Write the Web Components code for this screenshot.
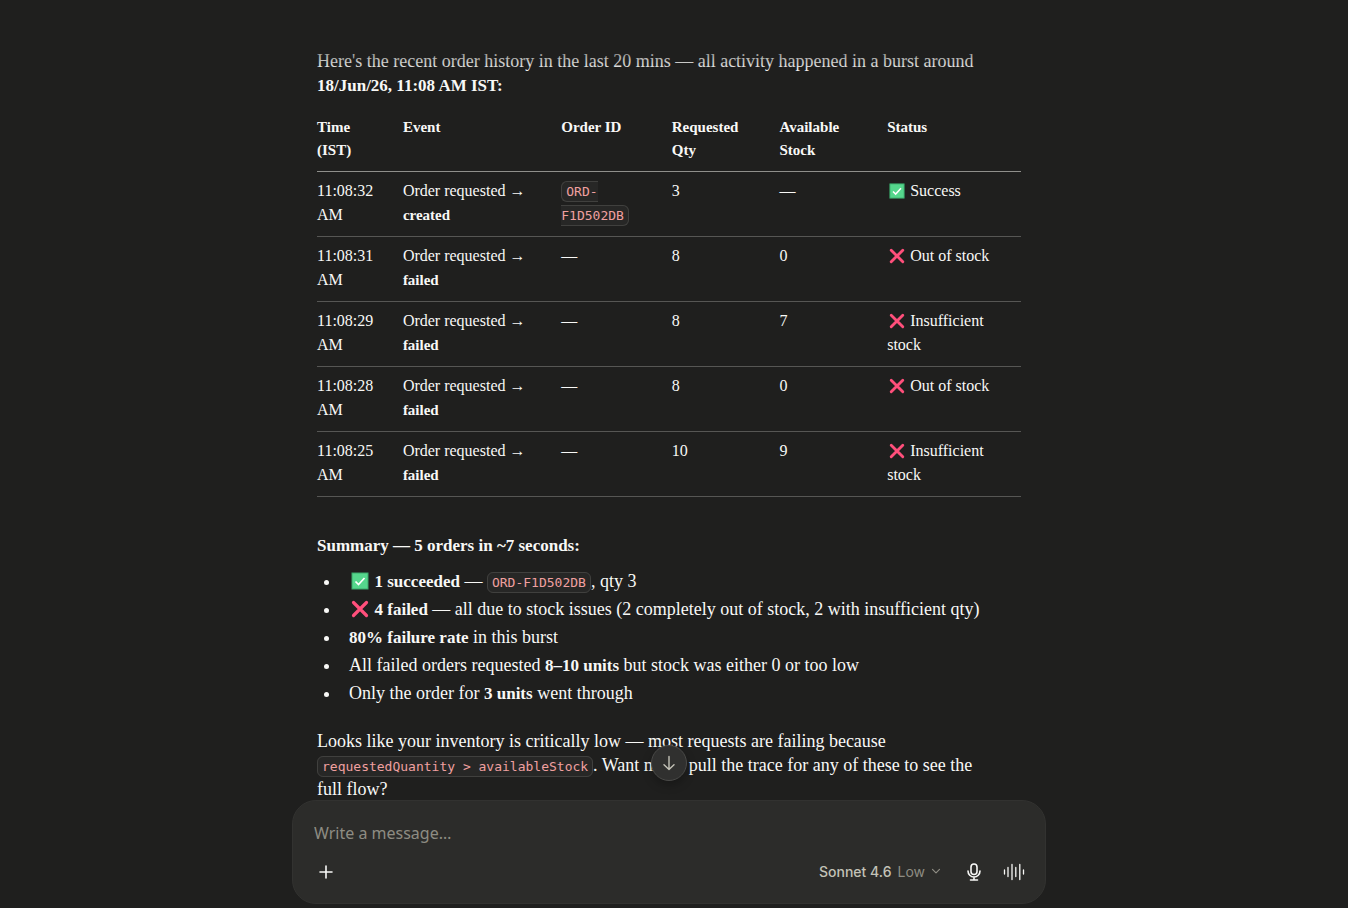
<!DOCTYPE html>
<html lang="en">
<head>
  <meta charset="UTF-8">
  <meta name="viewport" content="width=device-width, initial-scale=1.0">
  <title>Order history</title>
  <style>
    body {
      margin: 0;
      background-color: #1f1f1e;
      color: #f8f8f6;
      font-family: "Liberation Serif", serif;
      font-size: 18px;
      line-height: 24px;
    }

    strong {
      font-size: 17px;
      line-height: 20px;
    }
  </style>
</head>
<body>
  <chat-app>
    <chat-message>
      <p>Here's the recent order history in the last 20 mins — all activity happened in a burst around <strong>18/Jun/26, 11:08 AM IST:</strong></p>
      <order-table></order-table>
      <order-summary></order-summary>
      <p>Looks like your inventory is critically low — most requests are failing because <inline-code>requestedQuantity &gt; availableStock</inline-code>. Want me to pull the trace for any of these to see the full flow?</p>
    </chat-message>
    <message-composer slot="composer"></message-composer>
  </chat-app>

  <script>
    class ChatApp extends HTMLElement {
      constructor() {
        super();
        this.attachShadow({ mode: "open" });
      }

      connectedCallback() {
        this.shadowRoot.innerHTML = /*html*/ `
        <style>
          :host {
            display: flex;
            flex-direction: column;
            box-sizing: border-box;
            height: 100vh;
            padding: 0 10px 4px 0;
            position: relative;
          }

          /* fades the thread out under the top bar */
          :host::before {
            content: "";
            position: absolute;
            z-index: 1;
            inset: 0 0 auto 0;
            height: 72px;
            background: linear-gradient(#1f1f1e 40%, transparent);
            pointer-events: none;
          }

          main {
            flex: 1;
            min-height: 0;
            overflow: hidden;
            padding: 49px 24px 0;
          }

          footer {
            display: flex;
            justify-content: center;
            padding: 0 16px;
          }
        </style>
        <main><slot></slot></main>
        <footer><slot name="composer"></slot></footer>
        `;
      }
    }

    class ChatMessage extends HTMLElement {
      constructor() {
        super();
        this.attachShadow({ mode: "open" });
      }

      connectedCallback() {
        this.shadowRoot.innerHTML = /*html*/ `
        <style>
          :host {
            display: block;
            max-width: 704px;
            margin: 0 auto;
          }

          ::slotted(p) {
            margin: 0;
            padding-right: 32px;
          }

          ::slotted(order-table) {
            margin: 12px 0 36px;
          }

          ::slotted(order-summary) {
            margin-bottom: 24px;
          }
        </style>
        <slot></slot>
        `;
      }
    }

    class InlineCode extends HTMLElement {
      constructor() {
        super();
        this.attachShadow({ mode: "open" });
      }

      connectedCallback() {
        this.shadowRoot.innerHTML = /*html*/ `
        <style>
          :host {
            display: inline;
          }

          code {
            padding: 2px 4px;
            border: 1px solid #40403e;
            border-radius: 6px;
            background-color: #272726;
            color: #f0a0a0;
            font-family: "DejaVu Sans Mono", monospace;
            font-size: 13px;
            line-height: 16px;
          }
        </style>
        <code><slot></slot></code>`;
      }
    }

    class StatusIcon extends HTMLElement {
      constructor() {
        super();
        this.attachShadow({ mode: "open" });
      }

      connectedCallback() {
        const ok = this.getAttribute("kind") === "ok";
        const shape = ok
          ? `<rect x="1" y="1" width="16" height="16" fill="#55d68c" stroke="#3aa86a" stroke-width="1"/>
             <path d="M4.5 9.5l3 3 6-6.5" fill="none" stroke="#fff" stroke-width="1.7"/>`
          : `<path d="M2.5 2.5l13 13M15.5 2.5l-13 13" fill="none" stroke="#ff4f7b" stroke-width="3.2" stroke-linecap="round"/>`;

        this.shadowRoot.innerHTML = /*html*/ `
        <style>
          :host {
            display: inline-block;
            width: 1em;
            height: 1em;
            margin: 0 1px 0 2px;
            vertical-align: -3px;
          }

          svg {
            display: block;
            width: 100%;
            height: 100%;
          }
        </style>
        <svg viewBox="0 0 18 18" role="img" aria-label="${ok ? "Succeeded" : "Failed"}">${shape}</svg>
        `;
      }
    }

    class OrderTable extends HTMLElement {
      constructor() {
        super();
        this.attachShadow({ mode: "open" });
        this.orders = [
          { time: "11:08:32 AM", result: "created", id: "ORD-F1D502DB", qty: "3", stock: "—", kind: "ok", status: "Success" },
          { time: "11:08:31 AM", result: "failed", qty: "8", stock: "0", kind: "error", status: "Out of stock" },
          { time: "11:08:29 AM", result: "failed", qty: "8", stock: "7", kind: "error", status: "Insufficient stock" },
          { time: "11:08:28 AM", result: "failed", qty: "8", stock: "0", kind: "error", status: "Out of stock" },
          { time: "11:08:25 AM", result: "failed", qty: "10", stock: "9", kind: "error", status: "Insufficient stock" },
        ];
      }

      row(order) {
        const id = order.id ? `<inline-code>${order.id}</inline-code>` : "—";
        return `
          <tr>
            <td>${order.time}</td>
            <td>Order requested → <strong>${order.result}</strong></td>
            <td>${id}</td>
            <td>${order.qty}</td>
            <td>${order.stock}</td>
            <td><status-icon kind="${order.kind}"></status-icon> ${order.status}</td>
          </tr>`;
      }

      connectedCallback() {
        this.shadowRoot.innerHTML = /*html*/ `
        <style>
          :host {
            display: block;
            font-size: 16px;
          }

          table {
            width: 100%;
            table-layout: fixed;
            border-collapse: separate;
            border-spacing: 0;
          }

          th,
          td {
            box-sizing: border-box;
            padding: 7px 20px 9px 0;
            border-bottom: 1px solid #565654;
            text-align: left;
            vertical-align: top;
          }

          th {
            font-size: 15px;
            line-height: 23px;
            border-bottom-color: #8f8f8b;
          }

          strong {
            font-size: 15px;
            line-height: 20px;
          }

          th:last-child,
          td:last-child {
            padding-right: 8px;
          }

          .time { width: 12.2%; }
          .event { width: 22.5%; }
          .id { width: 15.7%; }
          .num { width: 15.3%; }
        </style>
        <table>
          <thead>
            <tr>
              <th class="time">Time (IST)</th>
              <th class="event">Event</th>
              <th class="id">Order ID</th>
              <th class="num">Requested Qty</th>
              <th class="num">Available Stock</th>
              <th>Status</th>
            </tr>
          </thead>
          <tbody>${this.orders.map(this.row).join("")}</tbody>
        </table>
        `;
      }
    }

    class OrderSummary extends HTMLElement {
      constructor() {
        super();
        this.attachShadow({ mode: "open" });
      }

      connectedCallback() {
        this.shadowRoot.innerHTML = /*html*/ `
        <style>
          :host {
            display: block;
          }

          p {
            margin: 0 0 12px;
          }

          strong {
            font-size: 17px;
            line-height: 20px;
          }

          ul {
            display: flex;
            flex-direction: column;
            gap: 4px;
            margin: 0;
            padding-left: 24px;
          }

          li {
            padding-left: 8px;
          }
        </style>
        <p><strong>Summary — 5 orders in ~7 seconds:</strong></p>
        <ul>
          <li><status-icon kind="ok"></status-icon> <strong>1 succeeded</strong> — <inline-code>ORD-F1D502DB</inline-code>, qty 3</li>
          <li><status-icon kind="error"></status-icon> <strong>4 failed</strong> — all due to stock issues (2 completely out of stock, 2 with insufficient qty)</li>
          <li><strong>80% failure rate</strong> in this burst</li>
          <li>All failed orders requested <strong>8–10 units</strong> but stock was either 0 or too low</li>
          <li>Only the order for <strong>3 units</strong> went through</li>
        </ul>
        `;
      }
    }

    class IconButton extends HTMLElement {
      constructor() {
        super();
        this.attachShadow({ mode: "open" });
      }

      connectedCallback() {
        this.shadowRoot.innerHTML = /*html*/ `
        <style>
          :host {
            display: block;
          }

          button {
            display: flex;
            align-items: center;
            justify-content: center;
            width: 32px;
            height: 32px;
            padding: 0;
            border: none;
            border-radius: 8px;
            background: none;
            color: #f8f8f6;
            cursor: pointer;
          }

          button:hover {
            background-color: #3a3a38;
          }

          :host([round]) button {
            box-sizing: border-box;
            width: 36px;
            height: 36px;
            border: 1px solid #4a4a48;
            border-radius: 50%;
            background-color: #30302f;
            color: #c3c2b7;
            box-shadow: 0 4px 10px rgba(0, 0, 0, 0.25);
          }
        </style>
        <button type="button" aria-label="${this.getAttribute("label")}"><slot></slot></button>
        `;
      }
    }

    class MessageComposer extends HTMLElement {
      constructor() {
        super();
        this.attachShadow({ mode: "open" });
      }

      connectedCallback() {
        this.shadowRoot.innerHTML = /*html*/ `
        <style>
          :host {
            display: block;
            flex: 1;
            max-width: 754px;
            position: relative;
            z-index: 2;
            font-family: "Noto Sans", sans-serif;
          }

          form {
            display: flex;
            flex-direction: column;
            gap: 11px;
            padding: 20px 15px 15px 17px;
            border: 1px solid #323230;
            border-radius: 24px;
            background-color: #2c2c2a;
          }

          input {
            box-sizing: border-box;
            width: 100%;
            height: 24px;
            padding: 0 4px;
            border: none;
            outline: none;
            background: none;
            color: #f8f8f6;
            font: inherit;
            font-size: 16px;
          }

          input::placeholder {
            color: #8e8c83;
            opacity: 1;
          }

          .tools {
            display: flex;
            align-items: center;
            gap: 8px;
          }

          .model {
            display: flex;
            align-items: center;
            gap: 6px;
            height: 32px;
            margin-left: auto;
            padding: 0 9px 2px;
            border: none;
            border-radius: 8px;
            background: none;
            color: #c3c2b7;
            font-family: Inter, sans-serif;
            font-size: 14px;
            font-weight: 500;
            cursor: pointer;
          }

          .effort,
          .model svg {
            color: #8e8c83;
            font-weight: 400;
          }

          .scroll {
            position: absolute;
            left: 50%;
            bottom: 100%;
            margin-bottom: 19px;
            transform: translateX(-50%);
          }
        </style>
        <icon-button class="scroll" round label="Scroll to bottom">
          <svg width="16" height="16" viewBox="0 0 16 16" fill="none" stroke="currentColor" stroke-width="1.4" stroke-linecap="round" stroke-linejoin="round">
            <path d="M8 1.5v13M3 9.8l5 4.7 5-4.7"/>
          </svg>
        </icon-button>
        <form>
          <input type="text" placeholder="Write a message…" aria-label="Write a message">
          <div class="tools">
            <icon-button label="Add files">
              <svg width="14" height="14" viewBox="0 0 14 14" fill="none" stroke="currentColor" stroke-width="1.6" stroke-linecap="round">
                <path d="M7 1v12M1 7h12"/>
              </svg>
            </icon-button>
            <button class="model" type="button">
              <span>Sonnet 4.6</span>
              <span class="effort">Low</span>
              <svg width="10" height="10" viewBox="0 0 10 10" fill="none" stroke="currentColor" stroke-width="1.2" stroke-linecap="round" stroke-linejoin="round">
                <path d="M1.5 3.3L5 6.8l3.5-3.5"/>
              </svg>
            </button>
            <icon-button label="Dictate">
              <svg width="16" height="18" viewBox="0 0 16 18" fill="none" stroke="currentColor" stroke-width="1.6" stroke-linecap="round">
                <rect x="5" y="1" width="6" height="10.5" rx="3"/>
                <path d="M2 8a6 6 0 0 0 12 0M8 14v3M4.5 17h7"/>
              </svg>
            </icon-button>
            <icon-button label="Voice mode">
              <svg width="22" height="18" viewBox="0 0 22 18" fill="none" stroke="currentColor" stroke-width="1.3" stroke-linecap="round">
                <path d="M1.5 7v4M5 4.5v9M9 1.5v15M12.8 4.5v9M16.8 1.5v15M20.5 7v4"/>
              </svg>
            </icon-button>
          </div>
        </form>
        `;
      }
    }

    customElements.define("chat-app", ChatApp);
    customElements.define("chat-message", ChatMessage);
    customElements.define("inline-code", InlineCode);
    customElements.define("status-icon", StatusIcon);
    customElements.define("order-table", OrderTable);
    customElements.define("order-summary", OrderSummary);
    customElements.define("icon-button", IconButton);
    customElements.define("message-composer", MessageComposer);
  </script>
</body>
</html>
